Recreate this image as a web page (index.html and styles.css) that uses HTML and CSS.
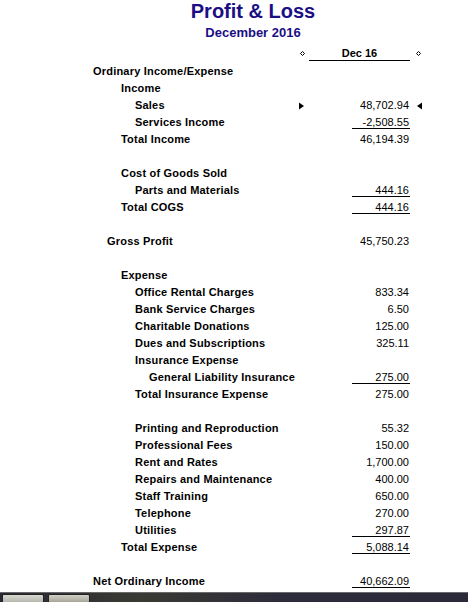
FILE: index.html
```html
<!DOCTYPE html>
<html>
<head>
<meta charset="utf-8">
<link rel="stylesheet" href="styles.css">
</head>
<body>
<div class="page">
  <div class="report">
    <header class="head">
      <h1 class="title">Profit &amp; Loss</h1>
      <div class="subtitle">December 2016</div>
    </header>
    <div class="grid colhead">
      <span></span>
      <span class="mark"><svg class="diamond" width="5" height="5" viewBox="0 0 5 5"><path d="M2.5 0.5 L4.5 2.5 L2.5 4.5 L0.5 2.5 Z" fill="none" stroke="#000" stroke-width="1"/></svg></span>
      <span class="colname">Dec 16</span>
      <span class="mark mark-r"><svg class="diamond" width="5" height="5" viewBox="0 0 5 5"><path d="M2.5 0.5 L4.5 2.5 L2.5 4.5 L0.5 2.5 Z" fill="none" stroke="#000" stroke-width="1"/></svg></span>
    </div>

    <div class="rows">
      <div class="grid row"><span class="label l0">Ordinary Income/Expense</span></div>
      <div class="grid row"><span class="label l2">Income</span></div>
      <div class="grid row">
        <span class="label l3">Sales</span>
        <span class="mark"><svg width="5" height="8" viewBox="0 0 5 8"><path d="M0 0.5 L5 4 L0 7.5 Z" fill="#000"/></svg></span>
        <span class="val"><span class="amt">48,702.94</span></span>
        <span class="mark mark-r"><svg width="5" height="8" viewBox="0 0 5 8"><path d="M5 0.5 L0 4 L5 7.5 Z" fill="#000"/></svg></span>
      </div>
      <div class="grid row"><span class="label l3">Services Income</span><span></span><span class="val"><span class="amt ul">-2,508.55</span></span></div>
      <div class="grid row"><span class="label l2">Total Income</span><span></span><span class="val"><span class="amt">46,194.39</span></span></div>
      <div class="grid row"></div>
      <div class="grid row"><span class="label l2">Cost of Goods Sold</span></div>
      <div class="grid row"><span class="label l3">Parts and Materials</span><span></span><span class="val"><span class="amt ul">444.16</span></span></div>
      <div class="grid row"><span class="label l2">Total COGS</span><span></span><span class="val"><span class="amt ul">444.16</span></span></div>
      <div class="grid row"></div>
      <div class="grid row"><span class="label l1">Gross Profit</span><span></span><span class="val"><span class="amt">45,750.23</span></span></div>
      <div class="grid row"></div>
      <div class="grid row"><span class="label l2">Expense</span></div>
      <div class="grid row"><span class="label l3">Office Rental Charges</span><span></span><span class="val"><span class="amt">833.34</span></span></div>
      <div class="grid row"><span class="label l3">Bank Service Charges</span><span></span><span class="val"><span class="amt">6.50</span></span></div>
      <div class="grid row"><span class="label l3">Charitable Donations</span><span></span><span class="val"><span class="amt">125.00</span></span></div>
      <div class="grid row"><span class="label l3">Dues and Subscriptions</span><span></span><span class="val"><span class="amt">325.11</span></span></div>
      <div class="grid row"><span class="label l3">Insurance Expense</span></div>
      <div class="grid row"><span class="label l4">General Liability Insurance</span><span></span><span class="val"><span class="amt ul">275.00</span></span></div>
      <div class="grid row"><span class="label l3">Total Insurance Expense</span><span></span><span class="val"><span class="amt">275.00</span></span></div>
      <div class="grid row"></div>
      <div class="grid row"><span class="label l3">Printing and Reproduction</span><span></span><span class="val"><span class="amt">55.32</span></span></div>
      <div class="grid row"><span class="label l3">Professional Fees</span><span></span><span class="val"><span class="amt">150.00</span></span></div>
      <div class="grid row"><span class="label l3">Rent and Rates</span><span></span><span class="val"><span class="amt">1,700.00</span></span></div>
      <div class="grid row"><span class="label l3">Repairs and Maintenance</span><span></span><span class="val"><span class="amt">400.00</span></span></div>
      <div class="grid row"><span class="label l3">Staff Training</span><span></span><span class="val"><span class="amt">650.00</span></span></div>
      <div class="grid row"><span class="label l3">Telephone</span><span></span><span class="val"><span class="amt">270.00</span></span></div>
      <div class="grid row"><span class="label l3">Utilities</span><span></span><span class="val"><span class="amt ul">297.87</span></span></div>
      <div class="grid row"><span class="label l2">Total Expense</span><span></span><span class="val"><span class="amt ul">5,088.14</span></span></div>
      <div class="grid row"></div>
      <div class="grid row"><span class="label l0">Net Ordinary Income</span><span></span><span class="val"><span class="amt ul">40,662.09</span></span></div>
    </div>
  </div>

  <div class="taskbar">
    <span class="tbtn"></span>
    <span class="tbtn tbtn2"></span>
  </div>
</div>
</body>
</html>
```

FILE: styles.css
```css
html, body {
  margin: 0;
  padding: 0;
  background: #ffffff;
}

.page {
  width: 468px;
  height: 602px;
  display: flex;
  flex-direction: column;
  overflow: hidden;
  font-family: "Liberation Sans", Arial, sans-serif;
  color: #000;
}

.report {
  flex: 1;
}

.head {
  padding-left: 38px;
  text-align: center;
  color: #1b0f85;
}

.title {
  margin: 0;
  font-size: 20px;
  font-weight: bold;
  line-height: 22px;
}

.subtitle {
  font-size: 13px;
  font-weight: bold;
  line-height: 21px;
}

.grid {
  display: grid;
  grid-template-columns: 296px 13px 101px 20px;
  height: 17px;
  line-height: 17px;
  font-size: 11px;
}

.colhead {
  height: 19px;
  line-height: 19px;
  font-weight: bold;
}

.rows {
  margin-top: 1px;
}

.colname {
  text-align: center;
  height: 17px;
  border-bottom: 1px solid #000;
  line-height: 20px;
}

.mark {
  display: flex;
  align-items: center;
  padding-left: 3px;
}

.mark-r {
  padding-left: 7px;
}

.colhead .mark {
  padding-left: 4px;
  padding-top: 1px;
}

.colhead .mark-r {
  padding-left: 6px;
}

.label {
  font-weight: bold;
  white-space: nowrap;
  letter-spacing: 0.2px;
}

.l0 { padding-left: 93px; }
.l1 { padding-left: 107px; }
.l2 { padding-left: 121px; }
.l3 { padding-left: 135px; }
.l4 { padding-left: 149px; }

.val {
  display: flex;
  justify-content: flex-end;
}

.amt {
  display: block;
  box-sizing: border-box;
  width: 58px;
  height: 15px;
  padding-right: 1px;
  text-align: right;
  line-height: 17px;
  white-space: nowrap;
}

.amt.ul {
  border-bottom: 1px solid #000;
}

.taskbar {
  height: 8px;
  margin-top: 2px;
  border-top: 1px solid #6a6a6a;
  background: linear-gradient(90deg, #2a2836 0%, #3a3a33 30%, #2d2c3c 60%, #2b2a3a 100%);
  display: flex;
  gap: 4px;
  padding: 1px 0 0 2px;
}

.tbtn {
  width: 42px;
  height: 8px;
  background: linear-gradient(#d8d8d2, #b8b8b0);
  border: 1px solid #222;
  border-bottom: none;
  border-radius: 2px 2px 0 0;
  box-sizing: border-box;
}

.tbtn2 {
  background: linear-gradient(#d0cfc6, #a8a69a);
}
```
